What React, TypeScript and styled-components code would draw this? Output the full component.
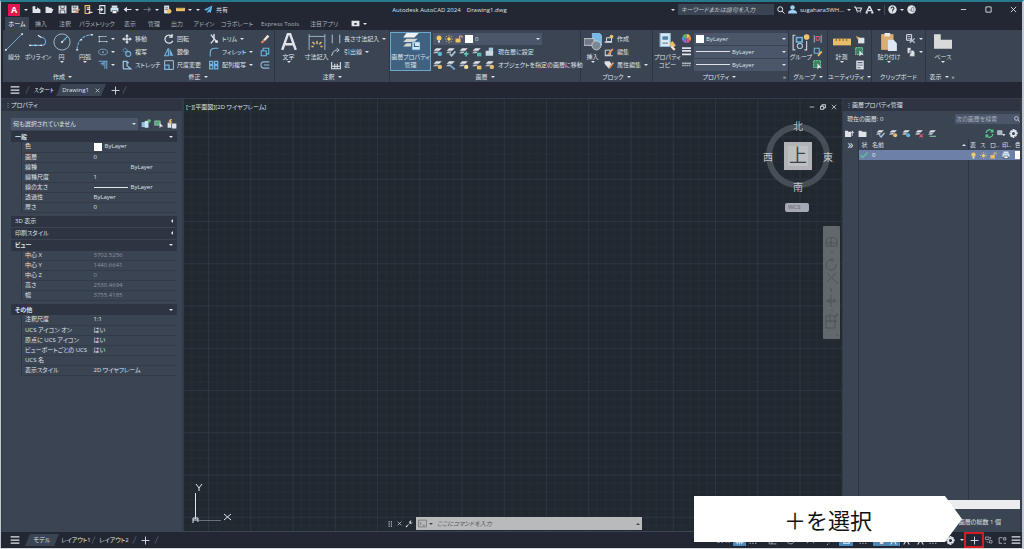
import React from "react";
import styled, { createGlobalStyle, css } from "styled-components";

const c = {
  bar: "#222733",
  panel: "#3b4453",
  head: "#2e3442",
  field: "#4b566a",
  line: "#2d3442",
  text: "#dfe3e9",
  dim: "#a9b0bc",
  blue: "#6fb3e0",
  gold: "#e9bd6a",
  green: "#5fc08a",
  red: "#e0606a",
};

const Global = createGlobalStyle`
  * { box-sizing: border-box; }
  html, body { margin: 0; background: ${c.bar}; }
  body, button, input, select {
    font-family: "Open Sans", "Noto Sans CJK JP", sans-serif;
    font-size: 6px;
    line-height: 10px;
    font-feature-settings: "palt";
    color: ${c.text};
  }
  button, input, select { margin: 0; padding: 0; border: 0; background: none; border-radius: 0; outline: 0; }
  select { appearance: none; }
  svg { display: block; flex: none; }
`;

/* ---------- icons ---------- */

const stack = (
  <>
    <path d="M5 2h9l-4 4H1z" fill={c.text} />
    <path d="M3 7h6l-2 3H0z" fill="#b9c0c9" />
  </>
);
const win = (
  <path d="M1 3h8v7H1z" fill="#9fb4c9" stroke={c.text} />
);

const art: Record<string, React.ReactNode> = {
  newFile: <path d="M1 2h5v5h3V4l6 4v6H1z" fill={c.text} />,
  open: <path d="M1 3h5l1 2h5v2h3l-3 7H1z" fill={c.text} />,
  save: <><path d="M1 1h14v14H1z" fill={c.text} /><path d="M5 1v5h6V1M4 15V9h8v6" fill="none" stroke={c.bar} strokeWidth="1.2" /></>,
  saveAs: <><path d="M1 1h12v13H1z" fill={c.text} /><path d="M4 1v4h5V1M3 9h8" fill="none" stroke={c.bar} strokeWidth="1.2" /><path d="m7 13 7-7 2 2-7 7z" fill="#e08a5a" /></>,
  fromWeb: <><path d="M2 1h8v14H2z" fill="none" stroke={c.gold} strokeWidth="2" /><path d="M5 5h5M5 8h6M8 13h7" stroke={c.text} strokeWidth="2" /></>,
  toWeb: <><path d="M5 1h9v14H5z" fill="none" stroke={c.text} strokeWidth="2" /><path d="M1 8h9M7 5l3 3-3 3" fill="none" stroke={c.text} strokeWidth="2" /></>,
  print: <><path d="M3 1h10v4H3z" fill={c.text} /><path d="M1 5h14v7H1z" fill="#c9e3f3" /><path d="M4 10h8v5H4z" fill="#fff" stroke={c.bar} /></>,
  undo: <path d="M7 3 1 8l6 5V9h8V7H7z" fill={c.text} />,
  redo: <path d="m9 3 6 5-6 5V9H1V7h8z" fill="#626b7a" />,
  plotList: <><path d="M2 1h9v14H2z" fill={c.text} /><path d="M4 5h5M4 8h5" stroke={c.bar} /><circle cx="11" cy="11" r="4" fill={c.gold} /></>,
  ruler: <><path d="M0 5h16v6H0z" fill={c.gold} /><path d="M3 5v2M6 5v2M9 5v2M12 5v2" stroke="#8a6a2a" /></>,
  plane: <path d="M15 1 0 8l4 2 8-6-6 7v4l3-3 3 2z" fill="#5bb4ea" />,
  search: <path d="M10 10l5 5M11.500 6.500a5 5 0 1 1-10 0 5 5 0 0 1 10 0z" fill="none" stroke={c.text} strokeWidth="2" />,
  user: <><circle cx="8" cy="4.500" r="4" fill="#9fd0f2" /><path d="M0 15c0-5 4-6 8-6s8 1 8 6z" fill="#9fd0f2" /></>,
  cart: <path d="M0 2h3l3 8h7l2-6H5M6 13h1M12 13h1" fill="none" stroke={c.text} strokeWidth="2.200" />,
  logoA: <path d="m8 2-6 12M8 2l6 12M4 10h8M1 14h4M11 14h4" fill="none" stroke={c.text} strokeWidth="2.500" />,
  help: <><circle cx="8" cy="8" r="7.500" fill={c.text} /><path d="M5.500 6c0-3 5-3 5 0 0 2-2.500 2-2.500 4M8 11.500v1.500" fill="none" stroke={c.bar} strokeWidth="1.800" /></>,
  feed: <><circle cx="8" cy="8" r="7.500" fill={c.text} /><path d="M4 9h4M8 5v6l4 1V4z" fill="none" stroke="#7d8590" strokeWidth="1.500" /></>,
  min: <path d="M2 8h12" stroke={c.text} strokeWidth="2" />,
  max: <path d="M2 2h12v12H2z" fill="none" stroke={c.text} strokeWidth="2" />,
  restore: <path d="M1 6h9v8H1zM5 6V2h10v8h-5" fill="none" stroke={c.text} strokeWidth="2.500" />,
  close: <path d="m2 2 12 12M14 2 2 14" stroke={c.text} strokeWidth="2" />,
  menu: <path d="M1 3h14M1 8h14M1 13h14" stroke={c.text} strokeWidth="2" />,
  plus: <path d="M8 1v14M1 8h14" stroke={c.text} strokeWidth="1.600" />,
  clip: <path d="M1 3h14v10H1z M6 7h4v3H6z" fill={c.text} fillRule="evenodd" />,
  line: <><path d="M1 15 15 1" stroke={c.blue} strokeWidth=".8" /><path d="M0 15h1.500M14.500 1H16" stroke={c.text} strokeWidth="1.500" /></>,
  pline: <><path d="M1 11h10c5 0 5-7 0-7" fill="none" stroke={c.blue} strokeWidth=".9" /><path d="M0 11h2M5 11h1.500M10 11h1.500M8 2l3 2" stroke={c.text} strokeWidth="1.200" /></>,
  circle: <><circle cx="8" cy="8" r="7.200" fill="none" stroke="#a8bed2" strokeWidth=".8" /><path d="M8 8l5-5" stroke={c.blue} strokeWidth="1.100" /><circle cx="8" cy="8" r="1" fill={c.text} /></>,
  arc: <><path d="M1 15C1 7 6 2 14 1.500" fill="none" stroke={c.blue} strokeWidth=".9" strokeDasharray="3 1" /><path d="M0 15h2M4 6h1.500M13 1.500h2" stroke={c.text} strokeWidth="1.300" /></>,
  rect: <><path d="M2 12V4h12M2 12h12" fill="none" stroke="#a8bed2" strokeWidth="1.300" /><path d="M1 4h2M13 12h2M1 12h2" stroke={c.text} strokeWidth="2" /></>,
  ellipse: <><ellipse cx="8" cy="8" rx="7" ry="4.500" fill="none" stroke="#7da9cc" strokeWidth="1.300" /><path d="M7 8h2" stroke={c.text} strokeWidth="2" /></>,
  hatch: <path d="M1 2h14M11 2v12M14 2v12M8 2v7M4 6h6" fill="none" stroke={c.blue} strokeWidth="1.500" />,
  move: <path d="M8 0 5 4h2v3H4V5L0 8l4 3V9h3v3H5l3 4 3-4H9V9h3v2l4-3-4-3v2H9V4h2z" fill={c.text} />,
  copy: <><circle cx="5" cy="5" r="3" fill="none" stroke={c.blue} strokeWidth="1.500" strokeDasharray="2 1" /><circle cx="10" cy="11" r="4" fill="none" stroke={c.blue} strokeWidth="1.800" /></>,
  stretch: <path d="M2 14V2h6v8M2 14h12l-6-5M8 4h3" fill="none" stroke="#9cc3e0" strokeWidth="2" />,
  rotate: <path d="M13 4a6.500 6.500 0 1 0 1 7M13 0v5H8" fill="none" stroke={c.text} strokeWidth="2" />,
  mirror: <><path d="M7 2v12H1z" fill="none" stroke={c.blue} strokeWidth="1.700" /><path d="M9 2v12h6z" fill={c.blue} /></>,
  scale: <><path d="M1 1h14v14H1z" fill="none" stroke="#a8bed2" strokeWidth="1.600" /><path d="M1 8h7v7H1z" fill="none" stroke={c.blue} strokeWidth="2" /></>,
  trim: <><path d="M3 1l8 10M8 0v9l-5 6" fill="none" stroke={c.text} strokeWidth="2.200" /><circle cx="12" cy="12" r="2.500" fill={c.text} /></>,
  fillet: <path d="M2 15V9c0-5 3-7 7-7h6" fill="none" stroke={c.blue} strokeWidth="1.800" />,
  array: <path d="M1 2h5v5H1zM9 2h5v5H9zM1 9h5v5H1zM9 9h5v5H9z" fill="none" stroke={c.blue} strokeWidth="2" />,
  erase: <><path d="m5 9 7-8 3 3-7 7z" fill="#f0e3cf" /><path d="m1 13 4-4 3 2-4 4z" fill="#e8824e" /></>,
  explode: <path d="M2 6h8v8H2zM5 6V2h9v9h-4" fill="none" stroke={c.blue} strokeWidth="1.800" />,
  offset: <path d="M15 3H6C0 3 0 13 6 13h9M15 8H6" fill="none" stroke="#8fb9d8" strokeWidth="1.700" />,
  letter: <path d="M2 15 7 1h2l5 14M4 10h8" fill="none" stroke={c.text} strokeWidth="2.200" />,
  dim: <><path d="M1 1v14M15 1v14M1 3h14" fill="none" stroke="#a8bed2" strokeWidth=".8" /><path d="M8 7v3M4 8l2 2M12 8l-2 2M3 12h2M11 12h2" stroke={c.gold} strokeWidth="1.300" /></>,
  dimLinear: <path d="M2 1v14M14 1v14" stroke="#a8bed2" strokeWidth="1.600" />,
  leader: <path d="M1 14c3-8 5-9 9-9M9 2l4 3-4 3" fill="none" stroke="#c3d2df" strokeWidth="1.600" />,
  table: <path d="M1 3v11h14V3M1 10h14M6 6v8M10 6v8" fill="none" stroke={c.text} strokeWidth="1.700" />,
  layers: <><path d="M4 0h11l-4 4H1z" fill="#f1f1ef" /><path d="M4 5h10l-3 3H1zM4 9h4v3H1z" fill="#d5d5d2" /><path d="M9 8h7v7H9z" fill="#d3e9f7" stroke="#4f9ed1" strokeWidth=".6" /><path d="M11 9v3h4" fill="none" stroke="#315f82" /></>,
  bulb: <><circle cx="8" cy="6" r="5" fill="#f1cb62" /><path d="M6 11h4v4H6z" fill={c.text} /></>,
  sun: <><circle cx="8" cy="8" r="3.500" fill="#f3d467" /><path d="M8 0v3M8 13v3M0 8h3M13 8h3M2 2l2 2M12 12l2 2M14 2l-2 2M4 12l-2 2" stroke="#f3c75a" strokeWidth="1.500" /></>,
  unlock: <><path d="M1 7h10v8H1z" fill="#f0c15b" /><path d="M9 7V2h5v4" fill="none" stroke={c.gold} strokeWidth="2" /></>,
  lyA: <>{stack}<circle cx="11" cy="11" r="3.500" fill="#5db7d5" /></>,
  lyB: <>{stack}<path d="M6 11l3 3 6-7" fill="none" stroke="#a5c8e0" strokeWidth="2.500" /></>,
  lyC: <>{stack}<path d="M8 11h7M11.500 7v8" stroke="#5ec2bd" strokeWidth="2.500" /></>,
  lyD: <>{stack}<path d="M8 9h7v6H8z" fill="#55b9a7" /></>,
  lyE: <><path d="M6 1h7v9H6z" fill="#a7c8e0" /><path d="M1 6h12v8H1z" fill="#c9d8e4" /></>,
  lyF: <>{stack}<circle cx="11" cy="11" r="3.500" fill={c.gold} /></>,
  lyG: <>{stack}<path d="M7 9l7 6" stroke="#6eaedb" strokeWidth="3" /></>,
  lyH: <>{stack}<circle cx="11.500" cy="11" r="3.500" fill="#e8e0a0" /></>,
  lyI: <>{stack}<path d="M8 9h7v6H8z" fill={c.gold} /></>,
  lyX: <>{stack}<path d="m8 9 6 6M14 9l-6 6" stroke="#e25a68" strokeWidth="2" /></>,
  lyOk: <>{stack}<path d="M3 13h11" stroke="#7ec89a" strokeWidth="2" /></>,
  insert: <><path d="M7 0h7l2 2v9H7z" fill="#7bb9e4" /><path d="M0 5h9v6H0z" fill="#6f7884" stroke="#c9ced5" strokeWidth=".8" /><circle cx="11" cy="11" r="4" fill="#7d8793" stroke="#c9ced5" strokeWidth=".8" /></>,
  blkNew: <><path d="M4 6h8v6H4z" fill="none" stroke={c.text} strokeWidth="1.500" /><path d="M1 13h12" stroke={c.text} strokeWidth="2" /><circle cx="12" cy="4" r="3" fill={c.gold} /></>,
  blkEdit: <><path d="M2 5h8v8H2z" fill="none" stroke={c.text} strokeWidth="1.500" /><path d="m6 11 7-9 2 2-7 9z" fill="#e69a5c" /><path d="M1 14h13" stroke={c.text} strokeWidth="1.500" /></>,
  blkAttr: <><path d="M1 2h8l4 6-5 6-7-8z" fill={c.text} /><path d="m7 12 7-9 2 2-7 9z" fill="#e69a5c" /></>,
  match: <><path d="M1 0h9v12H1z" fill="#d8e8f2" stroke="#8cb9d8" /><path d="M3 3h5v3H3z" fill="#4a80a8" /><path d="M3 9h5" stroke="#708090" /><path d="m9 10 3-3 3 4-3 2z" fill={c.gold} /><path d="m11 12 3 3" stroke="#f2ead8" strokeWidth="2" /></>,
  wheel: <><path d="M8 8V0a8 8 0 0 1 7 4z" fill="#e9c84e" /><path d="M8 8l7-4a8 8 0 0 1 0 8z" fill="#e68a4a" /><path d="M8 8l7 4a8 8 0 0 1-7 4z" fill="#d9566c" /><path d="M8 8v8a8 8 0 0 1-7-4z" fill="#8a6ac8" /><path d="M8 8l-7 4a8 8 0 0 1 0-8z" fill="#4a96d8" /><path d="M8 8 1 4a8 8 0 0 1 7-4z" fill="#62b86a" /></>,
  weight: <path d="M0 2h16M0 7h16M0 13h16" stroke={c.text} strokeWidth="3" />,
  ltype: <><path d="M0 6h16" stroke={c.dim} strokeWidth="3" /><path d="M0 10h16" stroke={c.dim} strokeWidth="2" strokeDasharray="3 1" /></>,
  group: <><path d="M3 2H1v13h2M11 15h2V7" fill="none" stroke="#cfd5dc" strokeWidth="1" /><path d="M4 4h5v4H4z" fill="none" stroke={c.blue} strokeWidth="1.500" /><circle cx="7" cy="11.500" r="2.300" fill="none" stroke="#a8bed2" /><circle cx="13" cy="3.500" r="2.500" fill="#f0c46c" /></>,
  ungroup: <><path d="M2 2v12M13 2v12" stroke="#a8bed2" strokeWidth="1.500" /><path d="M5 4h5v6H5z" fill="none" stroke={c.red} strokeWidth="1.600" /></>,
  grpEdit: <><path d="M2 2h8v8H2z" fill="none" stroke={c.blue} strokeWidth="1.700" /><path d="m7 13 6-7 2 2-6 7z" fill={c.gold} /></>,
  grpSel: <><path d="M1 1h11v11H1z" fill="#3f7d62" stroke={c.green} strokeWidth="1.800" strokeDasharray="3 1" /><path d="M7 5v10l3-3 4 1z" fill={c.text} /></>,
  pick: <><path d="M5 6h10v9H5z" fill={c.text} /><path d="M1 3l7 3-3 3z" fill={c.gold} /></>,
  calc: <><path d="M2 1h12v14H2z" fill={c.text} /><path d="M4 3h8v2H4zM4 7h2v2H4zM7 7h2v2H7zM10 7h2v2h-2zM4 11h2v2H4zM7 11h2v2H7z" fill="#59626f" /></>,
  paste: <><path d="M1 1h11v14H1z" fill="#d9ae72" /><path d="M4 0h5v3H4z" fill="#e9e9e6" /><path d="M7 6h5l3 3v7H7z" fill="#dfe8f2" /></>,
  cut: <><path d="M1 1h8v9H1z" fill="none" stroke={c.text} strokeWidth="1.600" /><path d="M3 4h4M3 7h4" stroke={c.text} /><path d="m6 7 8 7M14 7l-8 7" stroke="#c3cbd5" strokeWidth="1.700" /></>,
  pages: <path d="M2 1h6v9H2zM6 5h5l3 3v7H6z" fill={c.text} stroke={c.panel} strokeWidth=".8" />,
  base: <path d="M0 1h6v5h10v8H0z" fill="#d9d9d9" />,
  selPlus: <><path d="M1 5h7v8H1z" fill="#8fc1e6" /><path d="M6 3h6v11H6z" fill="#c9e4f6" /><path d="M13 0v6M10 3h6" stroke="#5fd07a" strokeWidth="2" /></>,
  selObj: <><path d="M1 3h9v7H1z" fill="#58a77c" stroke="#9bd3b5" /><path d="M9 6v9l2-3h4z" fill={c.text} /></>,
  selQuick: <><path d="M1 6h6v8H1zM8 7h7v8H8z" fill={c.text} /><path d="m5 0-3 5h3l-2 5 6-6H6l2-4z" fill={c.gold} /></>,
  folderNew: <><path d="M0 3h5l1 2h5v9H0z" fill={c.text} /><path d="M13 3v9M10 6h6" stroke={c.text} strokeWidth="1.500" /></>,
  folder: <path d="M1 3h5l2 2h7v9H1z" fill={c.text} />,
  refresh: <path d="M2 7a6 6 0 0 1 11-3M14 9a6 6 0 0 1-11 3M14 1v4h-4M2 15v-4h4" fill="none" stroke="#57c98a" strokeWidth="2.200" />,
  flag: <>{win}<path d="M9 9h6l-3 4z" fill={c.text} /></>,
  gear: <path fillRule="evenodd" d="M6.500 0h3l.5 2.300 2-1 2.200 2.200-1.200 2 2.500.5v3l-2.400.6 1.100 2-2.200 2.200-2-1.200L9.500 16h-3L6 13.600l-2 1-2.200-2.200 1.200-2L.5 9.500v-3L3 6 1.800 4 4 1.800l2 1.100zM8 5.300a2.700 2.700 0 1 0 0 5.400 2.700 2.700 0 0 0 0-5.400z" fill={c.text} />,
  check: <path d="m1 8 4 5L15 3" fill="none" stroke="#5fc39a" strokeWidth="2.500" />,
  wrench: <path d="M15 3a4 4 0 0 1-6 4l-6 8-2-2 8-6a4 4 0 0 1 4-6l-2 3 2 2z" fill={c.text} />,
  prompt: <><path d="M1 2h14v12H1z" fill="none" stroke="#777" strokeWidth="1.500" /><path d="m3 6 3 2-3 2M8 11h4" fill="none" stroke="#666" strokeWidth="1.400" /></>,
  grips: <path d="M3 0v4M3 6v4M3 12v4M9 0v4M9 6v4M9 12v4" stroke={c.dim} strokeWidth="3" />,
  grid: <path d="M1 4h14M1 8h14M1 12h14M4 1v14M8 1v14M12 1v14" stroke="#e8f3fb" strokeWidth="1.200" />,
  dots: <path d="M1 3h2M6 3h2M11 3h2M1 8h2M6 8h2M11 8h2M1 13h2M6 13h2M11 13h2" stroke={c.dim} strokeWidth="2" />,
  ortho: <path d="M2 1v13h13M2 9h5v5" fill="none" stroke={c.dim} strokeWidth="1.500" />,
  polar: <path d="M14 3a7 7 0 1 0 0 8M8 8h7" fill="none" stroke={c.dim} strokeWidth="1.500" />,
  iso: <path d="m2 13 6-11 6 11" fill="none" stroke={c.dim} strokeWidth="1.500" />,
  square: <path d="M3 3h10v10H3z" fill="none" stroke="#e8f3fb" strokeWidth="1.800" />,
  person: <path d="M8 1v6M3 15l5-8 5 8M3 4l10 4" fill="none" stroke={c.text} strokeWidth="2" />,
  isolate: <><path d="M1 2h7v5H1zM9 9h5v5H9z" fill="none" stroke={c.dim} strokeWidth="1.500" /><path d="M11 2v4M3 10l4 4" stroke={c.dim} strokeWidth="1.500" /></>,
  clean: <path d="M8 3H2v10h5M10 3h4v4h-4zM10 13h4" fill="none" stroke={c.dim} strokeWidth="1.600" />,
};

const Icon = ({ name, size = 10 }: { name: string; size?: number }) => (
  <svg width={size} height={size} viewBox="0 0 16 16" aria-hidden="true">{art[name]}</svg>
);

const Caret = styled.i<{ $dir?: "left" | "up" }>`
  display: block;
  flex: none;
  width: 0;
  height: 0;
  border: 2px solid transparent;
  ${(p) =>
    p.$dir === "left"
      ? css`border-right-color: ${c.text}; border-left-width: 0;`
      : p.$dir === "up"
      ? css`border-bottom-color: ${c.text}; border-top-width: 0;`
      : css`border-top-color: ${c.text}; border-bottom-width: 0;`}
`;

const Button = styled.button`
  display: flex;
  align-items: center;
  justify-content: center;
  gap: 3px;
  flex: none;
  white-space: nowrap;
`;

/* ---------- frame ---------- */

const Frame = styled.div`
  position: relative;
  display: flex;
  flex-direction: column;
  min-height: 100vh;
  overflow: hidden;
  background: ${c.bar};
  border: solid;
  border-width: 2px 2px 1px 1px;
  border-color: #27798c #c3c8ce #d5dadd #c3c8ce;
`;

const TitleBar = styled.header`
  display: flex;
  align-items: center;
  height: 15px;
  padding: 0 5px 0 7px;
`;

const Cluster = styled.div<{ $gap?: number }>`
  display: flex;
  align-items: center;
  gap: ${(p) => p.$gap ?? 4}px;
`;

const Brand = styled(Button)`
  width: 12px;
  height: 12px;
  background: #e3164f;
  color: #fff;
  font-size: 9px;
  font-weight: 700;
`;

const Title = styled.h1`
  margin: 0 auto;
  font-size: 6px;
  font-weight: 400;
  white-space: pre;
`;

const TitleSearch = styled.input`
  width: 96px;
  height: 11px;
  padding: 0 3px;
  background: ${c.panel};
  font-style: italic;
  &::placeholder { color: #c3c8d0; }
`;

const Divider = styled.span`
  width: 1px;
  height: 10px;
  background: #434b5a;
`;

const WindowButtons = styled.div`
  display: flex;
  gap: 18px;
  margin-left: 44px;
`;

const Tabs = styled.nav`
  display: flex;
  height: 13px;
  padding-left: 4px;
`;

const Tab = styled.button<{ $w: number; $on?: boolean }>`
  flex: none;
  width: ${(p) => p.$w}px;
  white-space: nowrap;
  color: ${(p) => (p.$on ? "#fff" : c.dim)};
  background: ${(p) => (p.$on ? c.panel : "none")};
`;

const ViewToggle = styled(Button)`
  margin-left: 8px;
`;

/* ---------- ribbon ---------- */

const Ribbon = styled.section`
  display: flex;
  height: 52px;
  margin-left: 2px;
  background: ${c.panel};
`;

const Panel = styled.section<{ $w: number; $edge?: boolean }>`
  display: flex;
  flex-direction: column;
  flex: none;
  width: ${(p) => p.$w}px;
  border-right: ${(p) => (p.$edge ? `1px solid ${c.line}` : "0")};
`;

const Tools = styled.div`
  display: flex;
  height: 41px;
  padding-top: 2px;
`;

const PanelTitle = styled.h2`
  display: flex;
  align-items: center;
  justify-content: center;
  gap: 3px;
  height: 11px;
  margin: 0;
  font-size: 6px;
  font-weight: 400;
  white-space: nowrap;
`;

const Launcher = styled.span<{ $push?: boolean }>`
  color: ${c.text};
  margin-right: 2px;
  ${(p) => p.$push && css`
    flex: 1;
    text-align: right;
  `}
`;

const Filler = styled.span`
  flex: 1;
`;

const Big = styled.button<{ $w: number; $on?: boolean }>`
  display: flex;
  flex-direction: column;
  align-items: center;
  flex: none;
  width: ${(p) => p.$w}px;
  height: 39px;
  padding-top: 1px;
  line-height: 8px;
  white-space: nowrap;
  background: ${(p) => (p.$on ? "#40617f" : "none")};
  box-shadow: ${(p) => (p.$on ? "inset 0 0 0 1px #6fa6cc" : "none")};
  svg { margin-bottom: 2px; }
`;

const Column = styled.div<{ $w: number }>`
  flex: none;
  width: ${(p) => p.$w}px;
`;

const Small = styled.button`
  display: flex;
  align-items: center;
  gap: 3px;
  height: 13px;
  white-space: nowrap;
`;

const IconRow = styled.div`
  display: flex;
  align-items: center;
  gap: 3px;
  height: 13px;
`;

const LayerPanel = styled.div`
  width: 111px;
  padding-left: 2px;
`;

const PropPanel = styled.div`
  flex: 1;
`;

const Combo = styled.label`
  display: flex;
  align-items: center;
  flex: 1;
  gap: 2px;
  min-width: 0;
  height: 12px;
  padding: 0 2px;
  background: ${c.field};
  select { flex: 1; min-width: 0; height: 10px; }
`;

const Swatch = styled.i`
  flex: none;
  width: 8px;
  height: 8px;
  background: #fff;
`;

const Rule = styled.i`
  flex: none;
  width: 34px;
  height: 1px;
  background: ${c.text};
`;

const BigTool = ({ icon, label, w, on, caret, size = 18 }: { icon: string; label: string; w: number; on?: boolean; caret?: boolean; size?: number }) => (
  <Big $w={w} $on={on}>
    <Icon name={icon} size={size} />
    {label.split("|").map((t) => <span key={t}>{t}</span>)}
    {caret && <Caret />}
  </Big>
);

type Tool = [icon: string, label?: string, caret?: boolean];
const ToolColumn = ({ w, items }: { w: number; items: Tool[] }) => (
  <Column $w={w}>
    {items.map(([icon, label, caret]) => (
      <Small key={icon} aria-label={label ?? icon}>
        <Icon name={icon} />
        {label}
        {caret && <Caret />}
      </Small>
    ))}
  </Column>
);

const Group = ({ title, w, edge, caret = true, launcher, children }: { title: string; w: number; edge?: boolean; caret?: boolean; launcher?: "end" | "inline"; children: React.ReactNode }) => (
  <Panel $w={w} $edge={edge}>
    <Tools>{children}</Tools>
    <PanelTitle>
      {launcher === "end" && <Filler />}
      {title}
      {caret && <Caret />}
      {launcher && <Launcher $push={launcher === "end"}>»</Launcher>}
    </PanelTitle>
  </Panel>
);

/* ---------- file and layout tabs ---------- */

const Strip = styled.div`
  display: flex;
  align-items: center;
  height: 16px;
  padding-left: 9px;
`;

const Slant = styled.button<{ $on?: boolean; $w: number }>`
  display: flex;
  align-items: center;
  justify-content: center;
  gap: 6px;
  flex: none;
  width: ${(p) => p.$w}px;
  height: 12px;
  white-space: nowrap;
  background: ${(p) => (p.$on ? c.panel : "none")};
  clip-path: polygon(5px 0, 100% 0, calc(100% - 5px) 100%, 0 100%);
`;

const Slash = styled.span`
  flex: none;
  width: 1px;
  height: 8px;
  background: #4b5464;
  transform: rotate(25deg);
`;

const LeadSlash = styled(Slash)`
  margin: 0 4px 0 7px;
`;

const LayoutTabs = styled.div`
  display: flex;
  align-items: center;
  padding-left: 5px;
`;

/* ---------- palettes ---------- */

const Main = styled.main`
  display: grid;
  grid-template-columns: 183px 1fr 180px;
  flex: 1;
  border-top: 1px solid #353c4d;
  border-bottom: 1px solid #3a4653;
`;

const Palette = styled.aside`
  display: flex;
  flex-direction: column;
  min-width: 0;
  background: ${c.panel};
  border: solid #333a49;
  border-width: 0 2px 0 1px;
`;

const PaletteHead = styled.h2`
  margin: 0;
  height: 12px;
  padding: 0 0 0 3px;
  background: ${c.head};
  font-size: 6px;
  font-weight: 400;
  line-height: 12px;
  &::before {
    content: "⋮";
    display: inline-block;
    width: 6px;
    color: ${c.dim};
  }
`;

const PropsBody = styled.div`
  padding: 7px 5px 0 9px;
`;

const SelectRow = styled.div`
  display: flex;
  align-items: center;
  gap: 3px;
  margin-bottom: 1px;
`;

const Section = styled.section<{ $open?: boolean }>`
  margin-bottom: ${(p) => (p.$open ? 3 : 1)}px;
`;

const SectionHead = styled.button<{ $open?: boolean }>`
  display: flex;
  align-items: center;
  justify-content: space-between;
  width: 100%;
  height: 11px;
  padding: 0 4px;
  background: ${c.head};
  font-weight: ${(p) => (p.$open ? 700 : 400)};
`;

const PropTable = styled.table`
  width: calc(100% - 10px);
  margin-left: 10px;
  border-collapse: collapse;
  table-layout: fixed;
  border-left: 1px solid ${c.line};
  th, td {
    height: 10px;
    padding: 0 0 0 3px;
    border-bottom: 1px solid #333b49;
    font-weight: 400;
    line-height: 9px;
    text-align: left;
    white-space: nowrap;
  }
  th { width: 69px; }
`;

const Value = styled.span<{ $dim?: boolean }>`
  display: flex;
  align-items: center;
  gap: 3px;
  height: 9px;
  color: ${(p) => (p.$dim ? "#8c94a1" : c.text)};
`;

const Blank = styled.i`
  width: 34px;
`;

type Prop = [name: string, value: string, kind?: "swatch" | "rule" | "blank" | "dim"];
const sections: { title: string; rows?: Prop[] }[] = [
  {
    title: "一般",
    rows: [
      ["色", "ByLayer", "swatch"], ["画層", "0"], ["線種", "ByLayer", "blank"], ["線種尺度", "1"],
      ["線の太さ", "ByLayer", "rule"], ["透過性", "ByLayer"], ["厚さ", "0"],
    ],
  },
  { title: "3D 表示" },
  { title: "印刷スタイル" },
  {
    title: "ビュー",
    rows: [
      ["中心 X", "3702.5256", "dim"], ["中心 Y", "1440.6641", "dim"], ["中心 Z", "0", "dim"],
      ["高さ", "2530.4694", "dim"], ["幅", "3755.4185", "dim"],
    ],
  },
  {
    title: "その他",
    rows: [
      ["注釈尺度", "1:1"], ["UCS アイコン オン", "はい"], ["原点に UCS アイコン", "はい"],
      ["ビューポートごとの UCS", "はい"], ["UCS 名", ""], ["表示スタイル", "2D ワイヤフレーム"],
    ],
  },
];

const Properties = () => (
  <Palette>
    <PaletteHead>プロパティ</PaletteHead>
    <PropsBody>
      <SelectRow>
        <Combo>
          <select aria-label="選択"><option>何も選択されていません</option></select>
          <Caret />
        </Combo>
        <Cluster $gap={3}>
          {["selPlus", "selObj", "selQuick"].map((n) => <Button key={n} aria-label={n}><Icon name={n} /></Button>)}
        </Cluster>
      </SelectRow>
      {sections.map(({ title, rows }) => (
        <Section key={title} $open={!!rows}>
          <SectionHead $open={!!rows}>{title}<Caret $dir={rows ? undefined : "left"} /></SectionHead>
          {rows && (
            <PropTable>
              <tbody>
                {rows.map(([name, value, kind]) => (
                  <tr key={name}>
                    <th scope="row">{name}</th>
                    <td>
                      <Value $dim={kind === "dim"}>
                        {kind === "swatch" && <Swatch />}
                        {kind === "rule" && <Rule />}
                        {kind === "blank" && <Blank />}
                        {value}
                      </Value>
                    </td>
                  </tr>
                ))}
              </tbody>
            </PropTable>
          )}
        </Section>
      ))}
    </PropsBody>
  </Palette>
);

/* ---------- drawing area ---------- */

const Canvas = styled.section`
  position: relative;
  min-width: 0;
  background: #212830;
`;

const GridArt = styled.svg`
  position: absolute;
  width: 100%;
  height: 100%;
`;

const ViewLabel = styled.span`
  position: absolute;
  top: 3px;
  left: 2px;
`;

const ViewWindow = styled.div`
  position: absolute;
  top: 5px;
  right: 5px;
  display: flex;
  gap: 5px;
`;

const Cube = styled.div`
  position: absolute;
  top: 21px;
  right: 9px;
  width: 70px;
  height: 74px;
  svg { margin: 4px auto 0; }
`;

const Face = styled.span<{ $x: number; $y: number; $big?: boolean }>`
  position: absolute;
  left: ${(p) => p.$x}px;
  top: ${(p) => p.$y}px;
  transform: translate(-50%, -50%);
  font-size: ${(p) => (p.$big ? 18 : 10)}px;
  line-height: 1;
  color: ${(p) => (p.$big ? "#3c4249" : "#c0c3c7")};
`;

const Wcs = styled.button`
  position: absolute;
  top: 104px;
  right: 33px;
  width: 24px;
  height: 9px;
  padding-left: 3px;
  border-radius: 2px;
  background: #a5a9b3;
  color: #5c626d;
  line-height: 9px;
  text-align: left;
`;

const NavBar = styled.div`
  position: absolute;
  top: 127px;
  right: 2px;
  width: 17px;
  height: 113px;
  border-radius: 1px;
  background: #63686d;
`;

const Ucs = styled.svg`
  position: absolute;
  left: 8px;
  bottom: 8px;
`;

const Command = styled.div`
  position: absolute;
  left: 31%;
  bottom: 1px;
  display: flex;
  align-items: center;
  gap: 3px;
  width: 254px;
  height: 13px;
`;

const CommandBox = styled.label`
  display: flex;
  align-items: center;
  flex: 1;
  gap: 2px;
  height: 13px;
  padding: 0 2px;
  background: #b8babc;
  i { border-top-color: #444; border-bottom-color: #444; }
  input { flex: 1; min-width: 0; padding-left: 2px; font-style: italic; }
  input::placeholder { color: #555; opacity: 1; }
`;

const Drawing = () => (
  <Canvas>
    <GridArt aria-hidden="true">
      <defs>
        <pattern id="g" x="24" y="37.500" width="42.250" height="42.250" patternUnits="userSpaceOnUse">
          <path d="M8.950 0v43M17.400 0v43M25.850 0v43M34.300 0v43M0 8.950h43M0 17.400h43M0 25.850h43M0 34.300h43" stroke="#252d35" />
          <path d="M.5 0v43M0 .5h43" stroke="#2d363f" />
        </pattern>
      </defs>
      <rect width="100%" height="100%" fill="url(#g)" />
    </GridArt>
    <ViewLabel>[−][平面図][2D ワイヤフレーム]</ViewLabel>
    <ViewWindow>
      {["min", "restore", "close"].map((n) => <Button key={n} aria-label={n}><Icon name={n} size={6} /></Button>)}
    </ViewWindow>
    <Cube>
      <svg width="64" height="64" viewBox="0 0 64 64" aria-hidden="true">
        <circle cx="32" cy="32" r="29" fill="none" stroke="#474e56" strokeWidth="6" />
        <path d="M18 18h28v28H18z" fill="#b1b3b7" />
        <path d="M22 22h20v20H22z" fill="#bdbfc2" />
      </svg>
      <Face $x={35} $y={6}>北</Face>
      <Face $x={5} $y={37}>西</Face>
      <Face $x={65} $y={37}>東</Face>
      <Face $x={35} $y={67}>南</Face>
      <Face $x={35} $y={35} $big>上</Face>
    </Cube>
    <Wcs>WCS</Wcs>
    <NavBar>
      <svg width="17" height="113" viewBox="0 0 17 113" fill="none" stroke="#4d5358" aria-label="ナビゲーション バー">
        <path d="M14 2h2M3 15c0-5 11-5 11 0v5H3zM3 17h11M8 12v8M8 26h2" />
        <path d="M13 38a5 5 0 1 1-2-3M7 33h4M4 47l9 9M13 47l-9 9M13 57h2M8 62v4" />
        <path d="M8 69v12M3 75h11M6 72v5M11 72v5M8 84h2M3 90h11v-3M3 90v12h9V90M7 87v10M3 95h11M13 109h2" />
      </svg>
    </NavBar>
    <Ucs width="42" height="40" viewBox="0 0 42 40" fill="none" stroke="#e2e5e8" aria-label="UCS">
      <path d="M3.500 10v26M1 40v-5h5v4M1 37h5" />
      <path d="M7 37.500h22" stroke="#66717c" />
      <path d="m4 1 3 4 3-4M7 5v3M32 31l7 6M39 31l-7 6" />
    </Ucs>
    <Command>
      <Icon name="grips" size={6} />
      <Button aria-label="閉じる"><Icon name="close" size={5} /></Button>
      <Button aria-label="カスタマイズ"><Icon name="wrench" size={8} /></Button>
      <CommandBox>
        <Icon name="prompt" size={9} />
        <Caret />
        <input aria-label="コマンド" placeholder="ここにコマンドを入力" />
        <Caret $dir="up" />
      </CommandBox>
    </Command>
  </Canvas>
);

/* ---------- layer manager ---------- */

const LayerTop = styled.div`
  display: flex;
  align-items: center;
  justify-content: space-between;
  height: 16px;
  padding: 0 0 0 4px;
`;

const LayerSearch = styled.label`
  display: flex;
  align-items: center;
  width: 65px;
  height: 10px;
  background: ${c.field};
  input { flex: 1; min-width: 0; padding-left: 1px; }
  input::placeholder { color: ${c.dim}; opacity: 1; }
`;

const LayerTools = styled.div`
  display: flex;
  align-items: center;
  justify-content: space-between;
  height: 12px;
  padding: 0 2px 0 2px;
`;

const LayerList = styled.div`
  display: grid;
  grid-template-columns: 16px 1fr;
  flex: 1;
`;

const Expand = styled.button`
  display: flex;
  justify-content: center;
  padding-top: 2px;
  border-right: 1px solid ${c.line};
  font-size: 12px;
  line-height: 8px;
`;

const LayerCols = styled.div`
  display: grid;
  background: linear-gradient(${c.line}, ${c.line}) no-repeat right 51px top / 1px 100%;
`;

const LayerTable = styled.table`
  align-self: start;
  width: 100%;
  border-collapse: collapse;
  table-layout: fixed;
  th, td {
    padding: 0 0 0 1px;
    height: 11px;
    font-weight: 400;
    text-align: left;
    white-space: nowrap;
    overflow: hidden;
    line-height: 10px;
  }
  td { background: #6d80a8; color: #f2f4f8; height: 10px; }
`;

const Th = styled.th<{ $w?: number }>`
  width: ${(p) => (p.$w ? `${p.$w}px` : "auto")};
`;

const Sortable = styled.span`
  display: flex;
  align-items: center;
  justify-content: space-between;
  padding-right: 3px;
`;

const ScrollTrack = styled.div`
  height: 9px;
  background: #ececee;
`;

const LayerFoot = styled.p`
  margin: 0;
  height: 22px;
  padding: 8px 19px 0 0;
  text-align: right;
`;

const Layers = () => (
  <Palette>
    <PaletteHead>画層プロパティ管理</PaletteHead>
    <LayerTop>
      <span>現在の画層: 0</span>
      <LayerSearch>
        <input aria-label="画層を検索" placeholder="次の画層を検索" />
        <Icon name="search" size={6} />
      </LayerSearch>
    </LayerTop>
    <LayerTools>
      <Cluster $gap={4}>
        {["folderNew", "folder"].map((n) => <Button key={n} aria-label={n}><Icon name={n} size={9} /></Button>)}
        <Divider />
        {["lyB", "lyF", "lyA", "lyX", "lyOk"].map((n) => <Button key={n} aria-label={n}><Icon name={n} size={9} /></Button>)}
      </Cluster>
      <Cluster $gap={3}>
        {["refresh", "flag", "gear"].map((n) => <Button key={n} aria-label={n}><Icon name={n} size={9} /></Button>)}
      </Cluster>
    </LayerTools>
    <LayerList>
      <Expand>»</Expand>
      <LayerCols>
        <LayerTable>
          <thead>
            <tr>
              <Th $w={12}>&nbsp;状</Th>
              <Th><Sortable>名前<Caret $dir="up" /></Sortable></Th>
              <Th $w={10}>表</Th><Th $w={10}>ス</Th><Th $w={12}>ロ..</Th><Th $w={13}>印..</Th><Th $w={6}>色</Th>
            </tr>
          </thead>
          <tbody>
            <tr>
              <td><Icon name="check" size={8} /></td>
              <td>0</td>
              <td><Icon name="bulb" size={7} /></td>
              <td><Icon name="sun" size={7} /></td>
              <td><Icon name="unlock" size={7} /></td>
              <td><Icon name="print" size={8} /></td>
              <td><Swatch as="svg" width="6" height="7" /></td>
            </tr>
          </tbody>
        </LayerTable>
      </LayerCols>
    </LayerList>
    <ScrollTrack />
    <LayerFoot>画層の総数 1 個</LayerFoot>
  </Palette>
);

/* ---------- status bar ---------- */

const StatusBar = styled.footer`
  display: flex;
  align-items: center;
  justify-content: space-between;
  height: 16px;
`;

const StatusItem = styled.button<{ $w?: number; $on?: boolean; $mark?: boolean }>`
  display: flex;
  align-items: center;
  justify-content: center;
  flex: none;
  width: ${(p) => p.$w ?? 13}px;
  height: ${(p) => (p.$mark ? 16 : 11)}px;
  background: ${(p) => (p.$on ? "#4a88b8" : "none")};
  border: ${(p) => (p.$mark ? "2px solid #d31c24" : "0")};
`;

const Callout = styled.div`
  position: absolute;
  right: 60px;
  bottom: 6px;
  display: flex;
  align-items: center;
  justify-content: center;
  width: 268px;
  height: 46px;
  background: #fff;
  clip-path: polygon(0 0, 251px 0, 100% 50%, 251px 100%, 0 100%);
  color: #111;
  font-size: 22px;
  line-height: 30px;
  font-family: "Noto Sans CJK JP", sans-serif;
  font-feature-settings: normal;
`;

const statusTools: [icon: string, w: number, on?: boolean][] = [
  ["grid", 13, true], ["dots", 15], ["ortho", 22], ["polar", 14], ["iso", 26], ["line", 16], ["square", 14, true],
  ["dots", 20], ["pages", 14, true], ["person", 13, true], ["person", 13], ["person", 14], ["dots", 13], ["gear", 20],
];

const quick = ["newFile", "open", "save", "saveAs", "fromWeb", "toWeb", "print"];
const tabs: [string, number][] = [
  ["ホーム", 24], ["挿入", 24], ["注釈", 24], ["パラメトリック", 40], ["表示", 26], ["管理", 22], ["出力", 24],
  ["アドイン", 30], ["コラボレート", 36], ["Express Tools", 50], ["注目アプリ", 38],
];

export default function App() {
  return (
    <Frame lang="ja">
      <Global />
      <TitleBar>
        <Cluster $gap={4}>
          <Brand>A</Brand>
          <Caret />
          {quick.map((n) => <Button key={n} aria-label={n}><Icon name={n} size={9} /></Button>)}
          <Button aria-label="元に戻す"><Icon name="undo" size={9} /><Caret /></Button>
          <Button aria-label="やり直し"><Icon name="redo" size={9} /><Caret /></Button>
          <Button aria-label="バッチ印刷"><Icon name="plotList" size={9} /></Button>
          <Button aria-label="計測"><Icon name="ruler" size={9} /><Caret /></Button>
          <Caret />
          <Button><Icon name="plane" size={9} />共有</Button>
        </Cluster>
        <Title>Autodesk AutoCAD 2024    Drawing1.dwg</Title>
        <Cluster $gap={3}>
          <Caret />
          <TitleSearch aria-label="検索" placeholder="キーワードまたは語句を入力" />
          <Button aria-label="検索"><Icon name="search" size={8} /></Button>
          <Button><Icon name="user" size={9} />sugahara3WH...<Caret /></Button>
          <Button aria-label="ストア"><Icon name="cart" size={8} /></Button>
          <Button aria-label="アプリ"><Icon name="logoA" size={9} /><Caret /></Button>
          <Divider />
          <Button aria-label="ヘルプ"><Icon name="help" size={9} /><Caret /></Button>
          <Button aria-label="お知らせ"><Icon name="feed" size={9} /></Button>
        </Cluster>
        <WindowButtons>
          {["min", "max", "close"].map((n) => <Button key={n} aria-label={n}><Icon name={n} size={7} /></Button>)}
        </WindowButtons>
      </TitleBar>

      <Tabs>
        {tabs.map(([t, w], i) => <Tab key={t} $w={w} $on={i === 0}>{t}</Tab>)}
        <ViewToggle aria-label="表示切替"><Icon name="clip" size={9} /><Caret /></ViewToggle>
      </Tabs>

      <Ribbon>
        <Group title="作成" w={119}>
          <BigTool icon="line" label="線分" w={22} />
          <BigTool icon="pline" label="ポリライン" w={26} />
          <BigTool icon="circle" label="円" w={21} caret />
          <BigTool icon="arc" label="円弧" w={26} caret />
          <ToolColumn w={20} items={[["rect", undefined, true], ["ellipse", undefined, true], ["hatch", undefined, true]]} />
        </Group>
        <Group title="修正" w={153} edge>
          <ToolColumn w={42} items={[["move", "移動"], ["copy", "複写"], ["stretch", "ストレッチ"]]} />
          <ToolColumn w={45} items={[["rotate", "回転"], ["mirror", "鏡像"], ["scale", "尺度変更"]]} />
          <ToolColumn w={51} items={[["trim", "トリム", true], ["fillet", "フィレット", true], ["array", "配列複写", true]]} />
          <ToolColumn w={14} items={[["erase"], ["explode"], ["offset"]]} />
        </Group>
        <Group title="注釈" w={115} edge>
          <BigTool icon="letter" label="文字" w={27} caret />
          <BigTool icon="dim" label="寸法記入" w={29} />
          <ToolColumn w={56} items={[["dimLinear", "長さ寸法記入", true], ["leader", "引出線", true], ["table", "表"]]} />
        </Group>
        <Group title="画層" w={191} edge>
          <BigTool icon="layers" label="画層プロパティ|管理" w={41} on />
          <LayerPanel>
            <IconRow>
              <Combo>
                <Icon name="bulb" size={8} /><Icon name="sun" size={8} /><Icon name="unlock" size={8} /><Swatch />
                <select aria-label="画層"><option>0</option></select>
                <Caret />
              </Combo>
            </IconRow>
            <IconRow>
              {["lyA", "lyB", "lyC", "lyD", "lyE"].map((n) => <Icon key={n} name={n} />)}
              <Button>現在層に設定</Button>
            </IconRow>
            <IconRow>
              {["lyF", "lyG", "lyH", "lyI", "lyF"].map((n, i) => <Icon key={i} name={n} />)}
              <Button>オブジェクトを指定の画層に移動</Button>
            </IconRow>
          </LayerPanel>
        </Group>
        <Group title="ブロック" w={72} edge>
          <BigTool icon="insert" label="挿入" w={23} caret />
          <ToolColumn w={48} items={[["blkNew", "作成"], ["blkEdit", "編集"], ["blkAttr", "属性編集", true]]} />
        </Group>
        <Group title="プロパティ" w={136} edge launcher="end">
          <BigTool icon="match" label="プロパティ|コピー" w={29} />
          <PropPanel>
            <IconRow><Icon name="wheel" size={9} /><Combo><Swatch /><select aria-label="色"><option>ByLayer</option></select><Caret /></Combo></IconRow>
            <IconRow><Icon name="weight" size={9} /><Combo><Rule /><select aria-label="線の太さ"><option>ByLayer</option></select><Caret /></Combo></IconRow>
            <IconRow><Icon name="ltype" size={9} /><Combo><Rule /><select aria-label="線種"><option>ByLayer</option></select><Caret /></Combo></IconRow>
          </PropPanel>
        </Group>
        <Group title="グループ" w={39} edge>
          <BigTool icon="group" label="グループ" w={24} />
          <ToolColumn w={12} items={[["ungroup"], ["grpEdit"], ["grpSel"]]} />
        </Group>
        <Group title="ユーティリティ" w={44} edge>
          <BigTool icon="ruler" label="計測" w={27} caret />
          <ToolColumn w={12} items={[["pick"], ["grpSel"], ["calc"]]} />
        </Group>
        <Group title="クリップボード" w={54} edge caret={false}>
          <BigTool icon="paste" label="貼り付け" w={34} caret />
          <ToolColumn w={19} items={[["cut", undefined, true], ["pages", undefined, true]]} />
        </Group>
        <Group title="表示" w={34} launcher="inline">
          <BigTool icon="base" label="ベース" w={34} caret />
        </Group>
      </Ribbon>

      <Strip>
        <Button aria-label="メニュー"><Icon name="menu" size={10} /></Button>
        <LeadSlash />
        <Slant $w={24}>スタート</Slant>
        <Slant $w={50} $on>Drawing1<Icon name="close" size={5} /></Slant>
        <Slant $w={18} aria-label="新しい図面"><Icon name="plus" size={9} /></Slant>
        <Slash />
      </Strip>

      <Main>
        <Properties />
        <Drawing />
        <Layers />
      </Main>

      <StatusBar>
        <Strip>
          <Button aria-label="メニュー"><Icon name="menu" size={10} /></Button>
          <LayoutTabs>
            <Slant $w={34} $on>モデル</Slant>
            <Slant $w={34}>レイアウト1</Slant>
            <Slash />
            <Slant $w={40}>レイアウト2</Slant>
            <Slash />
            <Slant $w={21} aria-label="新しいレイアウト"><Icon name="plus" size={9} /></Slant>
            <Slash />
          </LayoutTabs>
        </Strip>
        <Cluster $gap={0}>
          <StatusItem $w={20}>モデル</StatusItem>
          {statusTools.map(([n, w, on], i) => <StatusItem key={i} $w={w} $on={on} aria-label={n}><Icon name={n} size={9} /></StatusItem>)}
          <Caret />
          <StatusItem $w={20} $mark aria-label="追加"><Icon name="plus" size={9} /></StatusItem>
          <StatusItem $w={10} aria-label="選択表示"><Icon name="isolate" size={8} /></StatusItem>
          <StatusItem $w={16} aria-label="フルスクリーン"><Icon name="clean" size={9} /></StatusItem>
          <StatusItem $w={12} aria-label="カスタマイズ"><Icon name="menu" size={10} /></StatusItem>
        </Cluster>
      </StatusBar>

      <Callout>＋を選択</Callout>
    </Frame>
  );
}
